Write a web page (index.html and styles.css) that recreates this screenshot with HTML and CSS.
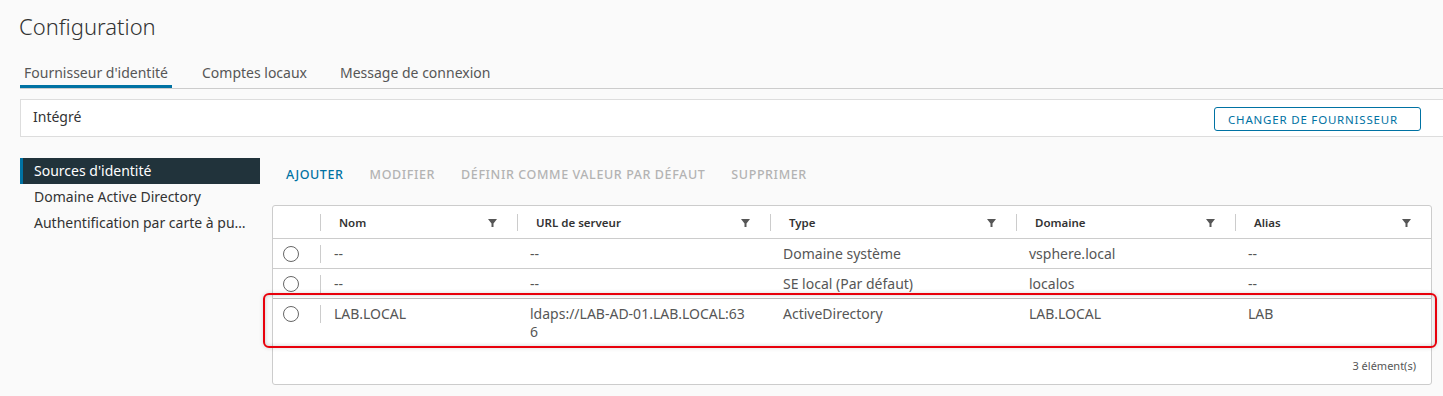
FILE: index.html
```html
<!DOCTYPE html>
<html lang="fr">
<head>
  <meta charset="UTF-8" />
  <title>Configuration</title>
  <link rel="stylesheet" href="styles.css">
</head>
<body>
  <div class="page">
    <h1>Configuration</h1>

    <nav class="tabs">
      <a class="tab active">Fournisseur d'identité</a>
      <a class="tab">Comptes locaux</a>
      <a class="tab">Message de connexion</a>
    </nav>

    <div class="provider">
      <span>Intégré</span>
      <button class="outline-button">CHANGER DE FOURNISSEUR</button>
    </div>

    <div class="content">
      <ul class="sidenav">
        <li class="active">Sources d'identité</li>
        <li>Domaine Active Directory</li>
        <li>Authentification par carte à puce</li>
      </ul>

      <div class="main">
        <div class="actions">
          <button class="link-button">AJOUTER</button>
          <button class="link-button" disabled>MODIFIER</button>
          <button class="link-button" disabled>DÉFINIR COMME VALEUR PAR DÉFAUT</button>
          <button class="link-button" disabled>SUPPRIMER</button>
        </div>

        <div class="grid">
          <div class="row head">
            <div class="cell select"></div>
            <div class="cell">Nom <svg class="filter" viewBox="0 0 9 8"><path d="M0 0H9L5.5 4.6V8H3.5V4.6Z"/></svg></div>
            <div class="cell">URL de serveur <svg class="filter" viewBox="0 0 9 8"><path d="M0 0H9L5.5 4.6V8H3.5V4.6Z"/></svg></div>
            <div class="cell">Type <svg class="filter" viewBox="0 0 9 8"><path d="M0 0H9L5.5 4.6V8H3.5V4.6Z"/></svg></div>
            <div class="cell">Domaine <svg class="filter" viewBox="0 0 9 8"><path d="M0 0H9L5.5 4.6V8H3.5V4.6Z"/></svg></div>
            <div class="cell">Alias <svg class="filter" viewBox="0 0 9 8"><path d="M0 0H9L5.5 4.6V8H3.5V4.6Z"/></svg></div>
          </div>
          <div class="row">
            <div class="cell select"><span class="radio"></span></div>
            <div class="cell">--</div>
            <div class="cell">--</div>
            <div class="cell">Domaine système</div>
            <div class="cell">vsphere.local</div>
            <div class="cell">--</div>
          </div>
          <div class="row">
            <div class="cell select"><span class="radio"></span></div>
            <div class="cell">--</div>
            <div class="cell">--</div>
            <div class="cell">SE local (Par défaut)</div>
            <div class="cell">localos</div>
            <div class="cell">--</div>
          </div>
          <div class="row marked">
            <div class="cell select"><span class="radio"></span></div>
            <div class="cell">LAB.LOCAL</div>
            <div class="cell url">ldaps://LAB-AD-01.LAB.LOCAL:636</div>
            <div class="cell">ActiveDirectory</div>
            <div class="cell">LAB.LOCAL</div>
            <div class="cell">LAB</div>
            <div class="highlight"></div>
          </div>
          <div class="grid-footer">3 élément(s)</div>
        </div>
      </div>
    </div>
  </div>
</body>
</html>
```

FILE: styles.css
```css
html, body {
  margin: 0;
  background: #fafafa;
  overflow: hidden;
}
body {
  font-family: "Noto Sans", Arial, sans-serif;
  color: #565656;
}
.page {
  padding: 12px 0 0 20px;
  width: 1440px;
}
h1 {
  margin: 0 0 0 -1px;
  font-size: 22px;
  font-weight: 300;
  color: #333;
  line-height: 28px;
}
.tabs {
  display: flex;
  margin-top: 23px;
  border-bottom: 1px solid #ccc;
  height: 25px;
}
.tab {
  font-size: 14px;
  padding: 0 4px;
  margin-right: 25px;
  line-height: 20px;
  color: #565656;
}
.tab.active {
  border-bottom: 3px solid #0072a3;
  margin-right: 26px;
}
.provider {
  margin-top: 10px;
  height: 36px;
  background: #fff;
  border: 1px solid #ddd;
  display: flex;
  align-items: center;
  justify-content: space-between;
  padding: 0 0 0 12px;
  font-size: 14px;
  color: #333;
}
.provider span {
  margin-top: -3px;
}
.outline-button {
  margin-right: 38px;
  margin-top: 2px;
  height: 24px;
  width: 207px;
  background: #fff;
  border: 1px solid #0072a3;
  border-radius: 3px;
  color: #0072a3;
  font-family: inherit;
  font-size: 11.5px;
  letter-spacing: 0.8px;
  padding: 0 0 0 4px;
  text-align: left;
  padding-left: 13px;
  cursor: pointer;
}
.content {
  display: flex;
  margin-top: 21px;
}
.sidenav {
  list-style: none;
  margin: 0;
  padding: 0;
  width: 240px;
  flex: none;
}
.sidenav li {
  height: 26px;
  line-height: 26px;
  padding: 0 12px 0 14px;
  font-size: 14px;
  color: #333;
  white-space: nowrap;
  overflow: hidden;
  text-overflow: ellipsis;
}
.sidenav li.active {
  background: #21333b;
  color: #fff;
  box-shadow: inset 3px 0 0 #0072a3;
}
.main {
  margin-left: 12px;
  width: 1160px;
}
.actions {
  display: flex;
  height: 36px;
  align-items: center;
  margin-top: -2px;
}
.link-button {
  background: none;
  border: none;
  padding: 0 12px 0 14px;
  font-family: inherit;
  font-size: 12.5px;
  font-weight: 500;
  letter-spacing: 0.6px;
  color: #0072a3;
}
.link-button:disabled {
  color: #b3b3b3;
}
.grid {
  position: relative;
  margin-top: 13px;
  background: #fff;
  border: 1px solid #ccc;
  border-radius: 3px;
  height: 178px;
}
.row {
  display: grid;
  grid-template-columns: 47px 197px 253px 246px 219px 1fr;
  border-bottom: 1px solid #ccc;
  position: relative;
  align-items: start;
  height: 29px;
}
.row.head {
  height: 32px;
  align-items: center;
}
.cell {
  font-size: 14px;
  color: #565656;
  padding: 6px 12px 0 13px;
  line-height: 18px;
}
.head .cell {
  position: relative;
  padding: 0 24px 0 18px;
  font-size: 11.5px;
  font-weight: 600;
  color: #333;
  border-left: 1px solid #ccc;
  line-height: 17px;
}
.head .cell.select {
  border-left: none;
  height: 17px;
}
.filter {
  position: absolute;
  right: 20px;
  top: 5px;
  width: 9px;
  height: 8px;
  fill: #565656;
}
.row .cell.select {
  padding: 7px 0 0 10px;
}
.row:not(.head) .cell:nth-child(2) {
  border-left: 1px solid #ccc;
  margin-top: 6px;
  padding-top: 0;
  height: 18px;
}
.radio {
  display: block;
  width: 14px;
  height: 14px;
  border: 1px solid #666;
  border-radius: 50%;
}
.url {
  word-break: break-all;
  padding-right: 22px;
}
.row.marked {
  border-bottom: none;
  border-top: 1px solid #bbb;
  margin-top: -1px;
  height: 47px;
}
.highlight {
  position: absolute;
  left: -10px;
  right: -6px;
  top: -6px;
  bottom: -2px;
  border: 2px solid #e8000b;
  border-radius: 6px;
  box-shadow: inset 0 0 4px rgba(0, 0, 0, 0.2), 0 0 4px rgba(0, 0, 0, 0.15);
  pointer-events: none;
}
.grid-footer {
  position: absolute;
  right: 15px;
  bottom: 11px;
  font-size: 11px;
  color: #565656;
}
```
